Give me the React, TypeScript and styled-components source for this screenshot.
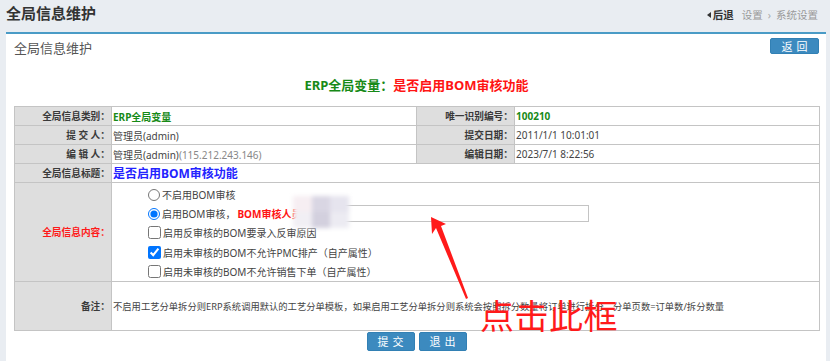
import React from 'react';
import styled, { createGlobalStyle } from 'styled-components';

const Global = createGlobalStyle`
  html, body { margin: 0; padding: 0; background: #e9edf2; }
  body {
    font-family: "Noto Sans", "Noto Sans CJK SC", sans-serif;
    font-size: 10px;
    color: #444;
  }
`;

const Page = styled.div`
  position: relative;
  width: 830px;
  height: 361px;
  overflow: hidden;
  display: flex;
  flex-direction: column;
`;

const TopBar = styled.header`
  height: 32px;
  box-sizing: border-box;
  display: flex;
  align-items: flex-start;
  justify-content: space-between;
  padding: 3px 12px 0 6px;
`;

const PageTitle = styled.h1`
  margin: 0;
  font-size: 15px;
  line-height: 20px;
  font-weight: 700;
  color: #333;
`;

const Crumbs = styled.nav`
  margin-top: 5px;
  display: flex;
  align-items: center;
  gap: 5px;
  font-size: 10.5px;
  line-height: 14px;
  color: #999;
`;

const Back = styled.span`
  color: #333;
  font-weight: 700;
  display: flex;
  align-items: center;
  gap: 2px;
  margin-right: 3px;
`;

const Caret = styled.span`
  width: 0;
  height: 0;
  border-top: 3px solid transparent;
  border-bottom: 3px solid transparent;
  border-right: 4px solid #333;
`;

const Sep = styled.span`
  color: #aaa;
`;

const Panel = styled.section`
  flex: 1;
  margin: 0 4px 0 6px;
  background: #fff;
  border-top: 2px solid #4a9bc6;
  padding: 0 7px 0 8px;
  display: flex;
  flex-direction: column;
`;

const PanelHead = styled.div`
  display: flex;
  align-items: flex-start;
  justify-content: space-between;
  padding-top: 4px;
`;

const PanelTitle = styled.div`
  margin-top: 2px;
  font-size: 13px;
  line-height: 16px;
  color: #555;
`;

const Btn = styled.button<{ $w?: number; $h?: number }>`
  width: ${(p) => p.$w ?? 48}px;
  height: ${(p) => p.$h ?? 19}px;
  padding: 0;
  background: #3c8abf;
  border: 1px solid #3280b4;
  border-radius: 2px;
  color: #fff;
  font-family: "Noto Sans CJK SC", sans-serif;
  font-size: 11px;
  letter-spacing: 4px;
  text-indent: 4px;
  line-height: 1;
`;

const Heading = styled.h2`
  margin: 21px 0 13px;
  text-align: center;
  font-size: 13px;
  line-height: 16px;
  font-weight: 700;
`;

const Green = styled.span`
  color: #178a17;
`;
const Red = styled.span`
  color: #ff1414;
`;

const Table = styled.table`
  width: 805px;
  table-layout: fixed;
  border-collapse: collapse;
  border: 1px solid #c4c4c4;
`;

const Row = styled.tr<{ $h: number }>`
  height: ${(p) => p.$h}px;
`;

const Label = styled.th<{ $red?: boolean }>`
  background: #dedede;
  border: 1px solid #c4c4c4;
  text-align: right;
  padding: 0 1px 0 0;
  font-size: 9.7px;
  font-weight: 700;
  color: ${(p) => (p.$red ? '#ff1a1a' : '#3a3a3a')};
  vertical-align: middle;
  white-space: nowrap;
`;

const Value = styled.td<{ $tone?: 'green' | 'blue' | 'plain' | 'note' }>`
  border: 1px solid #c4c4c4;
  padding: 0 0 0 1px;
  font-size: ${(p) =>
    p.$tone === 'blue' ? '12px' : p.$tone === 'note' ? '9.3px' : '10px'};
  font-weight: ${(p) => (p.$tone === 'green' || p.$tone === 'blue' ? 700 : 400)};
  color: ${(p) =>
    p.$tone === 'green' ? '#178a17' : p.$tone === 'blue' ? '#2323ff' : '#444'};
  vertical-align: middle;
  white-space: nowrap;
`;

const Faint = styled.span`
  color: #888;
`;

const OptionCell = styled.td`
  border: 1px solid #c4c4c4;
  padding: 2px 0 0 36px;
  vertical-align: top;
  font-size: 10px;
  color: #444;
`;

const Option = styled.label`
  display: flex;
  align-items: center;
  height: 19.2px;
  gap: 2px;
  white-space: nowrap;
`;

const Radio = styled.input`
  margin: 0;
  width: 12px;
  height: 12px;
`;

const Check = styled.input`
  margin: 0;
  width: 13px;
  height: 13px;
`;

const Strong = styled.span`
  color: #ff1414;
  font-weight: 700;
`;

const Reviewer = styled.input`
  margin-left: 2px;
  width: 284px;
  height: 17px;
  box-sizing: border-box;
  border: 1px solid #c4c4c4;
  padding: 0 2px;
  font-size: 10px;
`;

const Footer = styled.div`
  display: flex;
  justify-content: center;
  gap: 4px;
  margin-top: 1px;
`;

const Mosaic = styled.div`
  position: absolute;
  left: 293px;
  top: 196px;
  width: 56px;
  height: 32px;
  display: grid;
  grid-template-columns: repeat(3, 1fr);
  grid-template-rows: repeat(2, 1fr);
  filter: blur(2px);
`;

const Tile = styled.div<{ $c: string }>`
  background: ${(p) => p.$c};
`;

const Overlay = styled.svg`
  position: absolute;
  left: 0;
  top: 0;
  pointer-events: none;
`;

const Note = styled.div`
  position: absolute;
  left: 480px;
  top: 298px;
  font-family: "Noto Sans CJK SC", sans-serif;
  font-size: 34px;
  line-height: 34px;
  color: #ff1a1a;
  letter-spacing: 0.5px;
`;

const tiles = ['#f6eef2', '#d9d6e3', '#e6e4ee', '#f1eff4', '#d3d0de', '#ecebf2'];

export default function App() {
  return (
    <Page>
      <Global />
      <TopBar>
        <PageTitle>全局信息维护</PageTitle>
        <Crumbs>
          <Back>
            <Caret />
            后退
          </Back>
          <span>设置</span>
          <Sep>›</Sep>
          <span>系统设置</span>
        </Crumbs>
      </TopBar>
      <Panel>
        <PanelHead>
          <PanelTitle>全局信息维护</PanelTitle>
          <Btn $w={49} $h={16}>返回</Btn>
        </PanelHead>
        <Heading>
          <Green>ERP全局变量：</Green>
          <Red>是否启用BOM审核功能</Red>
        </Heading>
        <Table>
          <colgroup>
            <col style={{ width: 97 }} />
            <col style={{ width: 305 }} />
            <col style={{ width: 98 }} />
            <col style={{ width: 305 }} />
          </colgroup>
          <tbody>
            <Row $h={19}>
              <Label>全局信息类别：</Label>
              <Value $tone="green">ERP全局变量</Value>
              <Label>唯一识别编号：</Label>
              <Value $tone="green">100210</Value>
            </Row>
            <Row $h={19}>
              <Label>提 交 人：</Label>
              <Value>管理员(admin)</Value>
              <Label>提交日期：</Label>
              <Value>2011/1/1 10:01:01</Value>
            </Row>
            <Row $h={19}>
              <Label>编 辑 人：</Label>
              <Value>
                管理员(admin)<Faint>(115.212.243.146)</Faint>
              </Value>
              <Label>编辑日期：</Label>
              <Value>2023/7/1 8:22:56</Value>
            </Row>
            <Row $h={19}>
              <Label>全局信息标题：</Label>
              <Value $tone="blue" colSpan={3}>
                是否启用BOM审核功能
              </Value>
            </Row>
            <Row $h={98}>
              <Label $red>全局信息内容：</Label>
              <OptionCell colSpan={3}>
                <Option>
                  <Radio type="radio" name="bom" />
                  不启用BOM审核
                </Option>
                <Option>
                  <Radio type="radio" name="bom" defaultChecked />
                  启用BOM审核，<Strong>BOM审核人员</Strong>
                  <Reviewer type="text" />
                </Option>
                <Option>
                  <Check type="checkbox" />
                  启用反审核的BOM要录入反审原因
                </Option>
                <Option>
                  <Check type="checkbox" defaultChecked />
                  启用未审核的BOM不允许PMC排产（自产属性）
                </Option>
                <Option>
                  <Check type="checkbox" />
                  启用未审核的BOM不允许销售下单（自产属性）
                </Option>
              </OptionCell>
            </Row>
            <Row $h={49}>
              <Label>备注：</Label>
              <Value $tone="note" colSpan={3}>
                不启用工艺分单拆分则ERP系统调用默认的工艺分单模板，如果启用工艺分单拆分则系统会按照拆分数量将订单进行拆分，分单页数=订单数/拆分数量
              </Value>
            </Row>
          </tbody>
        </Table>
        <Footer>
          <Btn>提交</Btn>
          <Btn>退出</Btn>
        </Footer>
      </Panel>
      <Mosaic>
        {tiles.map((c, i) => (
          <Tile key={i} $c={c} />
        ))}
      </Mosaic>
      <Overlay width="830" height="361" viewBox="0 0 830 361">
        <path
          d="M431 217 L446 224 L441 226 L468 298 L466 299 L436 228 L432 234 Z"
          fill="#ff1a1a"
        />
      </Overlay>
      <Note>点击此框</Note>
    </Page>
  );
}
